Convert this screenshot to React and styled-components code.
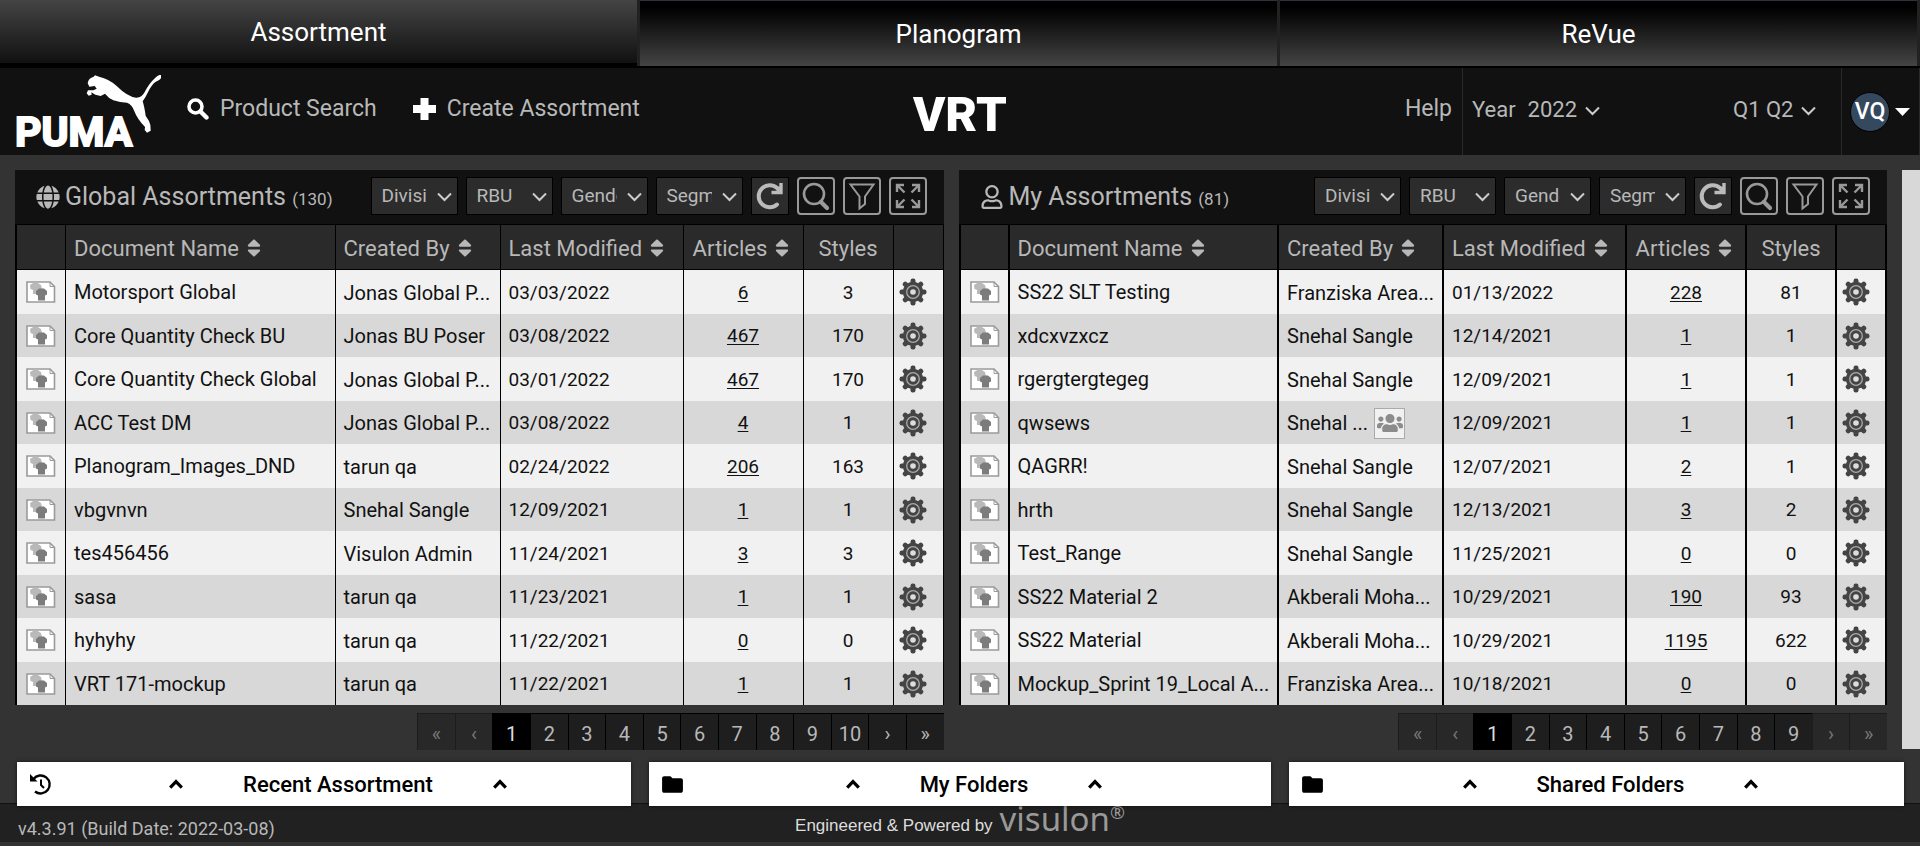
import React from "react";
import styled, { createGlobalStyle, css } from "styled-components";
import { FaGlobe, FaRegUser, FaSort, FaUsers } from "react-icons/fa";
import { MdFolder } from "react-icons/md";

const GlobalStyle = createGlobalStyle`
  * { box-sizing: border-box; }
  body {
    margin: 0;
    background: #333;
    color: #b8b8b8;
    font-family: Roboto, "Liberation Sans", sans-serif;
    font-size: 19px;
  }
  button, select { font: inherit; color: inherit; cursor: pointer; }
  a { color: inherit; text-decoration: none; }
  svg { display: block; flex: none; }
`;

/* ---------- top navigation ---------- */

const Tabs = styled.nav`
  display: grid;
  grid-template-columns: repeat(3, 1fr);
  column-gap: 3px;
  height: 68px;
  padding-right: 3px;
  background: #222;
  border-bottom: 2px solid #000;
`;

const Tab = styled.a`
  display: flex;
  align-items: center;
  justify-content: center;
  color: #fff;
  font-size: 26px;
  ${(p) =>
    p.$active
      ? css`
          background: linear-gradient(#444, #111);
          border-bottom: 3px solid #000;
        `
      : css`
          background: linear-gradient(#000 10%, #444);
          border-top: 1px solid #2b323c;
        `}
`;

const Header = styled.header`
  display: grid;
  grid-template-columns: 1fr auto 1fr;
  grid-template-rows: 87px;
  background: #111;
  font-size: 23px;
`;

const HeaderLeft = styled.div`
  display: flex;
  align-items: center;
  padding: 0 0 6px 15px;
`;

const BrandLink = styled.a`
  align-self: flex-start;
  margin: 7px 25px 0 0;
`;

const Action = styled.a`
  display: flex;
  align-items: center;
  gap: 11px;
  margin-right: 36px;
  white-space: nowrap;
`;

const ProductLogo = styled.a`
  display: flex;
  align-items: center;
`;

const HeaderRight = styled.div`
  display: flex;
  justify-content: flex-end;
`;

const HelpLink = styled.a`
  display: flex;
  align-items: center;
  padding: 0 10px 6px 0;
`;

const Period = styled.div`
  display: flex;
  align-items: center;
  justify-content: space-between;
  width: 380px;
  padding: 0 25px 4px 9px;
  border-left: 1px solid #2a2a2a;
  border-right: 1px solid #2a2a2a;
  font-size: 22px;
`;

const PeriodLabel = styled.label`
  display: flex;
  align-items: center;
  gap: 12px;
`;

const SelectBox = styled.span`
  position: relative;
  display: block;
  width: ${(p) => p.$width}px;
  svg {
    position: absolute;
    right: ${(p) => p.$inset || 0}px;
    top: 50%;
    margin-top: -4px;
    pointer-events: none;
  }
`;

const PlainSelect = styled.select`
  display: block;
  width: 100%;
  padding: 0;
  border: 0;
  appearance: none;
  background: transparent;
`;

const Account = styled.button`
  display: flex;
  align-items: center;
  gap: 5px;
  width: 78px;
  padding: 0 9px 0 8px;
  border: 0;
  border-right: 1px solid #2a2a2a;
  background: transparent;
`;

const Avatar = styled.span`
  display: grid;
  place-items: center;
  flex: none;
  width: 40px;
  height: 40px;
  border: 1px solid #000;
  border-radius: 50%;
  background: #34495e;
  color: #fff;
  font-weight: 500;
  font-size: 23px;
`;

/* ---------- assortment panels ---------- */

const Main = styled.main`
  display: flex;
  gap: 15px;
  padding: 15px 0 0 15px;
`;

const Panel = styled.section`
  flex: 1 1 0;
  min-width: 0;
`;

const ScrollTrack = styled.div`
  flex: none;
  width: 18px;
  margin-bottom: 1px;
  background: #d8d8d8;
`;

const Toolbar = styled.div`
  display: flex;
  align-items: center;
  gap: 8px;
  height: 54px;
  padding: 0 17px 3px 21px;
  background: #111;
`;

const Title = styled.h2`
  display: flex;
  align-items: center;
  gap: 5px;
  flex: 1;
  margin: 0;
  padding-top: 2px;
  font-size: 25px;
  font-weight: 400;
  white-space: nowrap;
`;

const Count = styled.small`
  font-size: 17px;
`;

const Filter = styled.select`
  display: block;
  width: 100%;
  height: 38px;
  padding: 0 30px 0 10px;
  border: 1px solid #000;
  border-radius: 0;
  appearance: none;
  background: #2c2c2c;
  text-overflow: clip;
`;

const RefreshButton = styled.button`
  display: grid;
  place-items: center;
  width: 38px;
  height: 38px;
  padding: 0;
  border: 1px solid #000;
  background: #2c2c2c;
`;

const OutlineButton = styled.button`
  display: grid;
  place-items: center;
  width: 38px;
  height: 38px;
  padding: 0;
  border: 2px solid #999;
  border-radius: 4px;
  background: transparent;
  color: #999;
`;

const Table = styled.table`
  width: 100%;
  table-layout: fixed;
  border-collapse: separate;
  border-spacing: 0;
  border-left: 2px solid #000;
  th, td { border-right: ${(p) => p.$line}px solid #000; }
`;

const Col = styled.col`
  width: ${(p) => (p.$width ? `${p.$width}px` : "auto")};
`;

const Th = styled.th`
  height: 46px;
  padding: 2px 8px 0;
  border-top: 1px solid #000;
  border-bottom: 1px solid #000;
  background: #2a2a2a;
  font-weight: 400;
  font-size: 22px;
  text-align: ${(p) => p.$align || "left"};
  white-space: nowrap;
`;

const SortButton = styled.button`
  display: inline-flex;
  align-items: center;
  gap: 4px;
  padding: 0;
  border: 0;
  background: transparent;
`;

const Row = styled.tr`
  height: 43px;
  background: #d8d8d8;
  &:nth-child(odd) {
    height: 44px;
    background: #f1f1f1;
  }
`;

const Td = styled.td`
  padding: 0 8px;
  color: #111;
  text-align: ${(p) => p.$align || "left"};
  white-space: nowrap;
  overflow: hidden;
`;

const TextCell = styled(Td)`
  font-size: 20px;
`;

const IconCell = styled(Td)`
  padding: 0 0 0 ${(p) => p.$inset}px;
`;

const CountLink = styled.a`
  text-decoration: underline;
  text-underline-offset: 2px;
  text-decoration-thickness: 1px;
`;

const Creator = styled.span`
  display: flex;
  align-items: center;
  gap: 6px;
  padding-top: 1px;
`;

const GroupBadge = styled.span`
  display: grid;
  place-items: center;
  width: 31px;
  height: 31px;
  border: 1px solid #aaa;
  background: #f1f1f1;
  color: #8c8c8c;
`;

const GearButton = styled.button`
  display: block;
  padding: 0;
  border: 0;
  background: transparent;
`;

const Pager = styled.nav`
  display: flex;
  justify-content: flex-end;
  padding-top: 8px;
`;

const PageButton = styled.button`
  width: 4.05%;
  height: 37px;
  padding: 4px 0 0;
  border: solid #000;
  border-width: 1px 0 0 1px;
  background: ${(p) => (p.$current ? "#000" : "#1e1e1e")};
  color: ${(p) => (p.$current ? "#ddd" : "#b8b8b8")};
  font-size: 20px;
  &:disabled {
    border-color: #1c1c1c;
    background: #282828;
    color: #777;
    cursor: default;
  }
`;

/* ---------- drawers and footer ---------- */

const Drawers = styled.div`
  position: relative;
  display: grid;
  grid-template-columns: 614fr 622fr 615fr;
  gap: 18px;
  padding: 12px 16px 0 17px;
`;

const Drawer = styled.button`
  display: flex;
  align-items: center;
  height: 44px;
  padding: 0 8px 0 11px;
  border: 0;
  background: #fff;
  color: #000;
  box-shadow: 0 0 4px rgba(0, 0, 0, 0.6);
  font-size: 22px;
  font-weight: 500;
`;

const DrawerLabel = styled.span`
  display: flex;
  align-items: center;
  justify-content: center;
  gap: 60px;
  flex: 1;
`;

const Footer = styled.footer`
  display: grid;
  grid-template-columns: 1fr auto 1fr;
  height: 39px;
  margin-top: -3px;
  padding: 0 18px;
  border-top: 1px solid #111;
  background: #212121;
  font-size: 18px;
`;

const Version = styled.span`
  padding-top: 14px;
`;

const Credit = styled.a`
  display: flex;
  align-items: baseline;
  gap: 7px;
  color: #ddd;
  font-family: "Liberation Sans", sans-serif;
  font-size: 17px;
  line-height: 30px;
`;

const Maker = styled.span`
  color: #999;
  font-family: "Noto Sans", sans-serif;
  font-weight: 400;
  font-size: 33px;
  sup {
    font-size: 18px;
    line-height: 0;
    vertical-align: 12px;
  }
`;

/* ---------- drawings ---------- */

const PumaLogo = () => (
  <svg width="147" height="86" viewBox="0 0 147 86" role="img" aria-label="Puma">
    <path
      transform="translate(0 -15) scale(.3334) translate(-45 0)"
      fill="#fff"
      d="M263 70Q266 53 280 51L285 46L297 50Q328 57 350 78Q382 110 408 113Q425 114 434 96Q447 70 466 53Q474 45 483 44V55Q478 62 465 67Q454 76 443 98Q436 113 428 124Q433 140 437 168Q448 182 451 195L452 212L441 218L434 210L435 201Q412 178 403 154Q397 134 381 128Q360 128 340 121Q325 114 315 101L302 108L286 104L274 97L275 104L266 107L260 100L264 91L280 91L290 86L284 78L268 80Z"
    />
    <text x="0" y="71" fill="#fff" stroke="#fff" strokeWidth="2" fontFamily="Roboto, sans-serif" fontWeight="700" fontSize="41">
      PUMA
    </text>
  </svg>
);

const VrtLogo = () => (
  <svg width="100" height="71" viewBox="0 0 100 71" role="img" aria-label="VRT">
    <text x="50" y="55" textAnchor="middle" fill="#fff" fontFamily="Roboto, sans-serif" fontWeight="900" fontSize="49">
      VRT
    </text>
  </svg>
);

const SearchGlyph = () => (
  <svg width="22" height="22" viewBox="0 0 22 22" fill="none" stroke="#fff">
    <circle cx="8.5" cy="8.5" r="6.5" strokeWidth="3.6" />
    <path d="M13.5 13.5L19.5 19.5" strokeWidth="4.4" strokeLinecap="round" />
  </svg>
);

const PlusGlyph = () => (
  <svg width="23" height="22" viewBox="0 0 23 22" fill="#fff">
    <path d="M7.5 0h8v7h7.5v8h-7.5v7h-8v-7H0V7h7.5z" />
  </svg>
);

const ChevronDown = () => (
  <svg width="15" height="10" viewBox="0 0 15 10" fill="none" stroke="#ccc" strokeWidth="2">
    <path d="M1 1.5L7.5 8L14 1.5" />
  </svg>
);

const ChevronUp = () => (
  <svg width="14" height="10" viewBox="0 0 14 10" fill="none" stroke="#000" strokeWidth="3.2">
    <path d="M1.2 8.6L7 2.6L12.8 8.6" />
  </svg>
);

const Caret = () => (
  <svg width="15" height="8" viewBox="0 0 15 8" fill="#fff">
    <path d="M0 0h15L7.5 8z" />
  </svg>
);

const HistoryGlyph = () => (
  <svg width="25" height="24" viewBox="0 0 25 24" fill="none" stroke="#000">
    <path d="M5.5 7A9 9 0 1 1 7 19.5" strokeWidth="2.4" />
    <path d="M2 2V9.5H9.5Z" fill="#000" stroke="none" />
    <path d="M13 7.5V13L16 16" strokeWidth="2" />
  </svg>
);

const RefreshGlyph = () => (
  <svg width="28" height="28" viewBox="0 0 28 28" fill="none" stroke="#bbb">
    <path d="M21 22.5A11 11 0 1 1 21 6" strokeWidth="4" strokeLinecap="round" />
    <path d="M25 1V10.5H15.5" strokeWidth="3.4" />
    <path d="M19 4l6 1v6l-4-1z" fill="#bbb" stroke="none" />
  </svg>
);

const LensGlyph = () => (
  <svg width="30" height="30" viewBox="0 0 30 30" fill="none" stroke="currentColor">
    <circle cx="13" cy="13" r="10" strokeWidth="2.6" />
    <path d="M20 21L26 27" strokeWidth="4.2" strokeLinecap="round" />
  </svg>
);

const FunnelGlyph = () => (
  <svg width="30" height="30" viewBox="0 0 30 30" fill="none" stroke="currentColor" strokeWidth="2">
    <path d="M3.5 3.5h23L18 15.5v7.5l-5.5 4.5v-12z" />
  </svg>
);

const ExpandGlyph = () => (
  <svg width="26" height="26" viewBox="0 0 26 26" fill="none" stroke="currentColor" strokeWidth="2.4">
    <path d="M9 2H2V9M2 2L9.5 9.5M17 2H24V9M24 2L16.5 9.5M9 24H2V17M2 24L9.5 16.5M17 24H24V17M24 24L16.5 16.5" />
  </svg>
);

const DocumentGlyph = () => (
  <svg width="30" height="22" viewBox="0 0 30 22">
    <path d="M1 1H24L28.5 5.5V21H1Z" fill="#fff" stroke="#9a9a9a" strokeWidth="1.6" />
    <path d="M24 1V5.5H28.5" fill="none" stroke="#9a9a9a" />
    <path d="M4 4l4-2.5h3L15 4l1 4-2 2v3H7V9L4.5 8z" fill="#b9b9b9" />
    <path d="M10 10l3-2.5h5l3 2.5v3.5l-2 1v5h-7v-5l-2-1z" fill="#7c7c7c" />
  </svg>
);

const teeth = [0, 45, 90, 135, 180, 225, 270, 315];

const GearGlyph = () => (
  <svg width="28" height="28" viewBox="0 0 28 28">
    {teeth.map((angle) => (
      <rect key={angle} x="11.5" y="0.5" width="5" height="8" rx="2.2" fill="#444" transform={`rotate(${angle} 14 14)`} />
    ))}
    <circle cx="14" cy="14" r="10.2" fill="#444" />
    <circle cx="14" cy="14" r="6.3" fill="none" stroke="#aaa" strokeWidth="1.3" />
    <circle cx="14" cy="14" r="2.8" fill="#ddd" />
  </svg>
);

/* ---------- data ---------- */

const globalRows = [
  ["Motorsport Global", "Jonas Global P...", "03/03/2022", 6, 3],
  ["Core Quantity Check BU", "Jonas BU Poser", "03/08/2022", 467, 170],
  ["Core Quantity Check Global", "Jonas Global P...", "03/01/2022", 467, 170],
  ["ACC Test DM", "Jonas Global P...", "03/08/2022", 4, 1],
  ["Planogram_Images_DND", "tarun qa", "02/24/2022", 206, 163],
  ["vbgvnvn", "Snehal Sangle", "12/09/2021", 1, 1],
  ["tes456456", "Visulon Admin", "11/24/2021", 3, 3],
  ["sasa", "tarun qa", "11/23/2021", 1, 1],
  ["hyhyhy", "tarun qa", "11/22/2021", 0, 0],
  ["VRT 171-mockup", "tarun qa", "11/22/2021", 1, 1],
];

const myRows = [
  ["SS22 SLT Testing", "Franziska Area...", "01/13/2022", 228, 81],
  ["xdcxvzxcz", "Snehal Sangle", "12/14/2021", 1, 1],
  ["rgergtergtegeg", "Snehal Sangle", "12/09/2021", 1, 1],
  ["qwsews", "Snehal ...", "12/09/2021", 1, 1, true],
  ["QAGRR!", "Snehal Sangle", "12/07/2021", 2, 1],
  ["hrth", "Snehal Sangle", "12/13/2021", 3, 2],
  ["Test_Range", "Snehal Sangle", "11/25/2021", 0, 0],
  ["SS22 Material 2", "Akberali Moha...", "10/29/2021", 190, 93],
  ["SS22 Material", "Akberali Moha...", "10/29/2021", 1195, 622],
  ["Mockup_Sprint 19_Local A...", "Franziska Area...", "10/18/2021", 0, 0],
];

const filters = ["Division", "RBU", "Gender", "Segment"];

function SortHead({ children, align }) {
  return (
    <Th $align={align}>
      <SortButton type="button">
        {children}
        <FaSort size={22} />
      </SortButton>
    </Th>
  );
}

function AssortmentPanel({ icon, title, count, rows, pages, line, atEnd }) {
  return (
    <Panel>
      <Toolbar>
        <Title>
          {icon}
          <span>
            {title} <Count>({count})</Count>
          </span>
        </Title>
        {filters.map((name) => (
          <SelectBox key={name} $width={87} $inset={6}>
            <Filter aria-label={name} defaultValue={name}>
              <option>{name}</option>
            </Filter>
            <ChevronDown />
          </SelectBox>
        ))}
        <RefreshButton type="button" aria-label="Refresh"><RefreshGlyph /></RefreshButton>
        <OutlineButton type="button" aria-label="Search"><LensGlyph /></OutlineButton>
        <OutlineButton type="button" aria-label="Filter"><FunnelGlyph /></OutlineButton>
        <OutlineButton type="button" aria-label="Expand"><ExpandGlyph /></OutlineButton>
      </Toolbar>
      <Table $line={line}>
        <colgroup>
          <Col $width={49} />
          <Col />
          <Col $width={165} />
          <Col $width={183} />
          <Col $width={120} />
          <Col $width={90} />
          <Col $width={50} />
        </colgroup>
        <thead>
          <tr>
            <Th />
            <SortHead>Document Name</SortHead>
            <SortHead>Created By</SortHead>
            <SortHead>Last Modified</SortHead>
            <SortHead align="center">Articles</SortHead>
            <Th $align="center">Styles</Th>
            <Th />
          </tr>
        </thead>
        <tbody>
          {rows.map(([name, creator, date, articles, styles, shared]) => (
            <Row key={name}>
              <IconCell $inset={9}><DocumentGlyph /></IconCell>
              <TextCell>{name}</TextCell>
              <TextCell>
                <Creator>
                  {creator}
                  {shared && <GroupBadge><FaUsers size={26} /></GroupBadge>}
                </Creator>
              </TextCell>
              <Td>{date}</Td>
              <Td $align="center"><CountLink href="#articles">{articles}</CountLink></Td>
              <Td $align="center">{styles}</Td>
              <IconCell $inset={5}>
                <GearButton type="button" aria-label={`Settings for ${name}`}><GearGlyph /></GearButton>
              </IconCell>
            </Row>
          ))}
        </tbody>
      </Table>
      <Pager aria-label={`${title} pages`}>
        <PageButton type="button" disabled>«</PageButton>
        <PageButton type="button" disabled>‹</PageButton>
        {Array.from({ length: pages }, (_, i) => (
          <PageButton key={i} type="button" $current={i === 0}>{i + 1}</PageButton>
        ))}
        <PageButton type="button" disabled={atEnd}>›</PageButton>
        <PageButton type="button" disabled={atEnd}>»</PageButton>
      </Pager>
    </Panel>
  );
}

function FolderDrawer({ icon, children }) {
  return (
    <Drawer type="button">
      {icon}
      <DrawerLabel>
        <ChevronUp />
        {children}
        <ChevronUp />
      </DrawerLabel>
    </Drawer>
  );
}

export default function App() {
  return (
    <>
      <GlobalStyle />
      <Tabs>
        <Tab href="#assortment" $active>Assortment</Tab>
        <Tab href="#planogram">Planogram</Tab>
        <Tab href="#revue">ReVue</Tab>
      </Tabs>
      <Header>
        <HeaderLeft>
          <BrandLink href="#home"><PumaLogo /></BrandLink>
          <Action href="#search"><SearchGlyph />Product Search</Action>
          <Action href="#create"><PlusGlyph />Create Assortment</Action>
        </HeaderLeft>
        <ProductLogo href="#home"><VrtLogo /></ProductLogo>
        <HeaderRight>
          <HelpLink href="#help">Help</HelpLink>
          <Period>
            <PeriodLabel>
              Year
              <SelectBox $width={72}>
                <PlainSelect defaultValue="2022"><option>2022</option></PlainSelect>
                <ChevronDown />
              </SelectBox>
            </PeriodLabel>
            <SelectBox $width={83}>
              <PlainSelect aria-label="Quarters" defaultValue="Q1 Q2"><option>Q1 Q2</option></PlainSelect>
              <ChevronDown />
            </SelectBox>
          </Period>
          <Account type="button"><Avatar>VQ</Avatar><Caret /></Account>
        </HeaderRight>
      </Header>
      <Main>
        <AssortmentPanel icon={<FaGlobe size={24} />} title="Global Assortments" count={130} rows={globalRows} pages={10} line={1} />
        <AssortmentPanel icon={<FaRegUser size={24} />} title="My Assortments" count={81} rows={myRows} pages={9} line={2} atEnd />
        <ScrollTrack />
      </Main>
      <Drawers>
        <FolderDrawer icon={<HistoryGlyph />}>Recent Assortment</FolderDrawer>
        <FolderDrawer icon={<MdFolder size={25} />}>My Folders</FolderDrawer>
        <FolderDrawer icon={<MdFolder size={25} />}>Shared Folders</FolderDrawer>
      </Drawers>
      <Footer>
        <Version>v4.3.91 (Build Date: 2022-03-08)</Version>
        <Credit href="#visulon">
          Engineered &amp; Powered by
          <Maker>visulon<sup>®</sup></Maker>
        </Credit>
      </Footer>
    </>
  );
}
